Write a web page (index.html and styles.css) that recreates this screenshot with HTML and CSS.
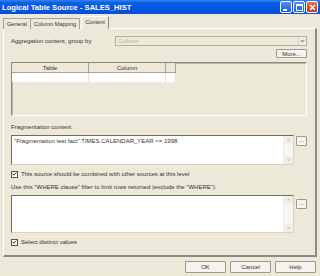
FILE: index.html
```html
<!DOCTYPE html>
<html lang="en">
<head>
  <meta charset="UTF-8">
  <title>Logical Table Source - SALES_HIST</title>
  <link rel="stylesheet" href="styles.css">
</head>
<body>
  <div class="window">

    <!-- Title bar -->
    <div class="titlebar">
      <span class="title">Logical Table Source - SALES_HIST</span>
      <div class="wbtns">
        <span class="wbtn"><span class="min-bar"></span></span>
        <span class="wbtn"><span class="max-box"></span></span>
        <span class="wbtn close">
          <svg width="7" height="7" viewBox="0 0 7 7"><path d="M1 1L6 6M6 1L1 6" stroke="#fff" stroke-width="1.4"/></svg>
        </span>
      </div>
    </div>

    <!-- Tabs -->
    <div class="tabs">
      <span class="tab">General</span>
      <span class="tab">Column Mapping</span>
      <span class="tab active">Content</span>
    </div>

    <div class="panel">
      <div class="row agg">
        <span class="label">Aggregation content, group by</span>
        <div class="combo">
          <span class="combo-text">Column</span>
          <span class="combo-arrow">
            <svg width="5" height="3" viewBox="0 0 5 3"><path d="M0 0L2.5 3L5 0Z" fill="#a8a8a0"/></svg>
          </span>
        </div>
      </div>

      <div class="row more-row">
        <span class="btn more">More...</span>
      </div>

      <div class="grid-box">
        <div class="grid-head">
          <span class="gcell c1">Table</span>
          <span class="gcell c2">Column</span>
          <span class="gcell c3"></span>
        </div>
        <div class="grid-row">
          <span class="rcell c1"></span>
          <span class="rcell c2"></span>
          <span class="rcell c3"></span>
        </div>
      </div>

      <div class="label frag-label">Fragmentation content:</div>
      <div class="row edit-row">
        <div class="textbox frag">
          <span class="tb-text">"Fragmentation test fact".TIMES.CALENDAR_YEAR &lt;= 1998</span>
          <div class="vscroll">
            <span class="sarrow">&#708;</span>
            <span class="sarrow">&#709;</span>
          </div>
        </div>
        <span class="btn dots frag-dots">...</span>
      </div>

      <div class="check-row combine">
        <span class="checkbox">
          <svg width="6" height="6" viewBox="0 0 6 6"><path d="M0.8 2.8L2.3 4.4L5.2 1.2" stroke="#222" stroke-width="1.1" fill="none"/></svg>
        </span>
        <span class="label">This source should be combined with other sources at this level</span>
      </div>

      <div class="label where-label">Use this "WHERE clause" filter to limit rows returned (exclude the "WHERE").</div>
      <div class="row edit-row">
        <div class="textbox where">
          <span class="tb-text"></span>
          <div class="vscroll">
            <span class="sarrow">&#708;</span>
            <span class="sarrow">&#709;</span>
          </div>
        </div>
        <span class="btn dots where-dots">...</span>
      </div>

      <div class="check-row distinct">
        <span class="checkbox">
          <svg width="6" height="6" viewBox="0 0 6 6"><path d="M0.8 2.8L2.3 4.4L5.2 1.2" stroke="#222" stroke-width="1.1" fill="none"/></svg>
        </span>
        <span class="label">Select distinct values</span>
      </div>
    </div>

    <!-- Dialog buttons -->
    <div class="actions">
      <span class="btn action">OK</span>
      <span class="btn action">Cancel</span>
      <span class="btn action">Help</span>
    </div>
  </div>
</body>
</html>
```

FILE: styles.css
```css
body {
  margin: 0;
  background: #ece9d8;
  font-family: 'Liberation Sans', Arial, sans-serif;
  color: #2a2a2a;
}

.window {
  width: 320px;
  height: 276px;
  overflow: hidden;
  background: #ece9d8;
}

.titlebar {
  height: 14px;
  display: flex;
  align-items: center;
  justify-content: space-between;
  padding: 0 2px 0 2px;
  background: linear-gradient(to bottom, #2f86f5 0%, #0a5de6 20%, #0254e4 70%, #0a4fd3 100%);
}

.title {
  color: #fff;
  font-weight: bold;
  font-size: 7.6px;
}

.wbtns {
  display: flex;
  gap: 1px;
}

.wbtn {
  width: 10px;
  height: 10px;
  border: 1px solid #fff;
  border-radius: 2px;
  background: linear-gradient(#4c8ef7, #1f5fe0);
  display: flex;
  align-items: center;
  justify-content: center;
  box-sizing: content-box;
}

.wbtn.close {
  background: linear-gradient(#e8704e, #c6361a);
}

.min-bar {
  width: 4px;
  height: 2px;
  background: #fff;
  margin-top: 5px;
  margin-right: 2px;
}

.max-box {
  width: 5px;
  height: 4px;
  border: 1px solid #fff;
  border-top-width: 2px;
}

.tabs {
  display: flex;
  align-items: flex-end;
  margin-top: 4px;
  padding-left: 3px;
  height: 11px;
  position: relative;
  z-index: 1;
}

.tab {
  font-size: 5.6px;
  height: 10px;
  line-height: 10px;
  padding: 0 3px;
  border: 1px solid #a0a0a0;
  border-bottom: none;
  background: #ece9d8;
  color: #333;
}

.tab + .tab {
  margin-left: -1px;
}

.tab.active {
  height: 12px;
  line-height: 11px;
  border-color: #fff #8a8a8a #fff #fff;
  margin-left: 1px;
  background: #ece9d8;
}

.panel {
  margin: -1px 3px 0 3px;
  height: 229px;
  border: 1px solid #fff;
  border-right: 2px solid #8a8a8a;
  border-bottom: 2px solid #8a8a8a;
  padding: 7px 8px 0 7px;
  box-sizing: border-box;
  background: #ece9d8;
}

.label {
  font-size: 6px;
  color: #333;
}

.row {
  display: flex;
  align-items: center;
}

.agg {
  height: 10px;
  justify-content: space-between;
}

.combo {
  width: 192px;
  height: 10px;
  box-sizing: border-box;
  border: 1px solid #b5b1a0;
  background: #ece9d8;
  display: flex;
  align-items: center;
  justify-content: space-between;
}

.combo-text {
  font-size: 6px;
  color: #b8b4a4;
  padding-left: 2px;
}

.combo-arrow {
  width: 7px;
  height: 8px;
  border-left: 1px solid #d8d4c4;
  display: flex;
  align-items: center;
  justify-content: center;
  background: #f2f0e6;
}

.more-row {
  justify-content: flex-end;
  margin-top: 3px;
}

.btn {
  font-size: 6px;
  color: #333;
  background: #f4f3ee;
  border: 1px solid #9d9a8c;
  border-radius: 1px;
  box-sizing: border-box;
  display: flex;
  align-items: center;
  justify-content: center;
}

.more {
  width: 31px;
  height: 9px;
}

.grid-box {
  margin-top: 4px;
  height: 54px;
  box-sizing: border-box;
  border: 1px solid #8c8a80;
  border-right-color: #fff;
  border-bottom-color: #fff;
  box-shadow: inset 1px 1px 0 #b9b6a8;
}

.grid-head, .grid-row {
  display: flex;
}

.gcell {
  height: 10px;
  font-size: 6px;
  line-height: 10px;
  text-align: center;
  color: #333;
  box-sizing: border-box;
  border-right: 1px solid #a7a396;
  border-bottom: 1px solid #a7a396;
  background: #ece9d8;
}

.rcell {
  height: 9px;
  background: #fff;
  box-sizing: border-box;
  border-right: 1px solid #e4e2d8;
}

.c1 { width: 77px; }
.c2 { width: 77px; }
.c3 { width: 10px; }

.frag-label {
  margin-top: 8px;
}

.edit-row {
  align-items: flex-start;
  margin-top: 5px;
}

.textbox {
  width: 284px;
  box-sizing: border-box;
  border: 1px solid #7f9db9;
  border-color: #6f6d64 #d8d4c4 #d8d4c4 #6f6d64;
  background: #fff;
  display: flex;
  justify-content: space-between;
}

.textbox.frag { height: 30px; }
.textbox.where { height: 38px; }

.tb-text {
  font-size: 6px;
  color: #333;
  padding: 2px 0 0 2px;
}

.vscroll {
  width: 9px;
  background: #f7f6f0;
  border-left: 1px solid #eeece4;
  display: flex;
  flex-direction: column;
  justify-content: space-between;
}

.sarrow {
  height: 8px;
  font-size: 6px;
  line-height: 8px;
  text-align: center;
  color: #a9a8a0;
  background: #f1efe6;
}

.dots {
  width: 11px;
  height: 10px;
  margin-left: 2px;
  align-items: flex-end;
  padding-bottom: 2px;
}

.frag-dots { margin-top: 1px; }
.where-dots { margin-top: 4px; }

.check-row {
  display: flex;
  align-items: center;
  gap: 3px;
  height: 8px;
}

.combine { margin-top: 5px; }
.distinct { margin-top: 5px; }

.checkbox {
  width: 7px;
  height: 7px;
  box-sizing: border-box;
  border: 1px solid #555;
  background: #fff;
  display: flex;
  align-items: center;
  justify-content: center;
}

.where-label {
  margin-top: 6px;
}

.actions {
  display: flex;
  justify-content: flex-end;
  gap: 4px;
  margin-top: 4px;
  padding-right: 4px;
}

.action {
  width: 41px;
  height: 12px;
}
```
